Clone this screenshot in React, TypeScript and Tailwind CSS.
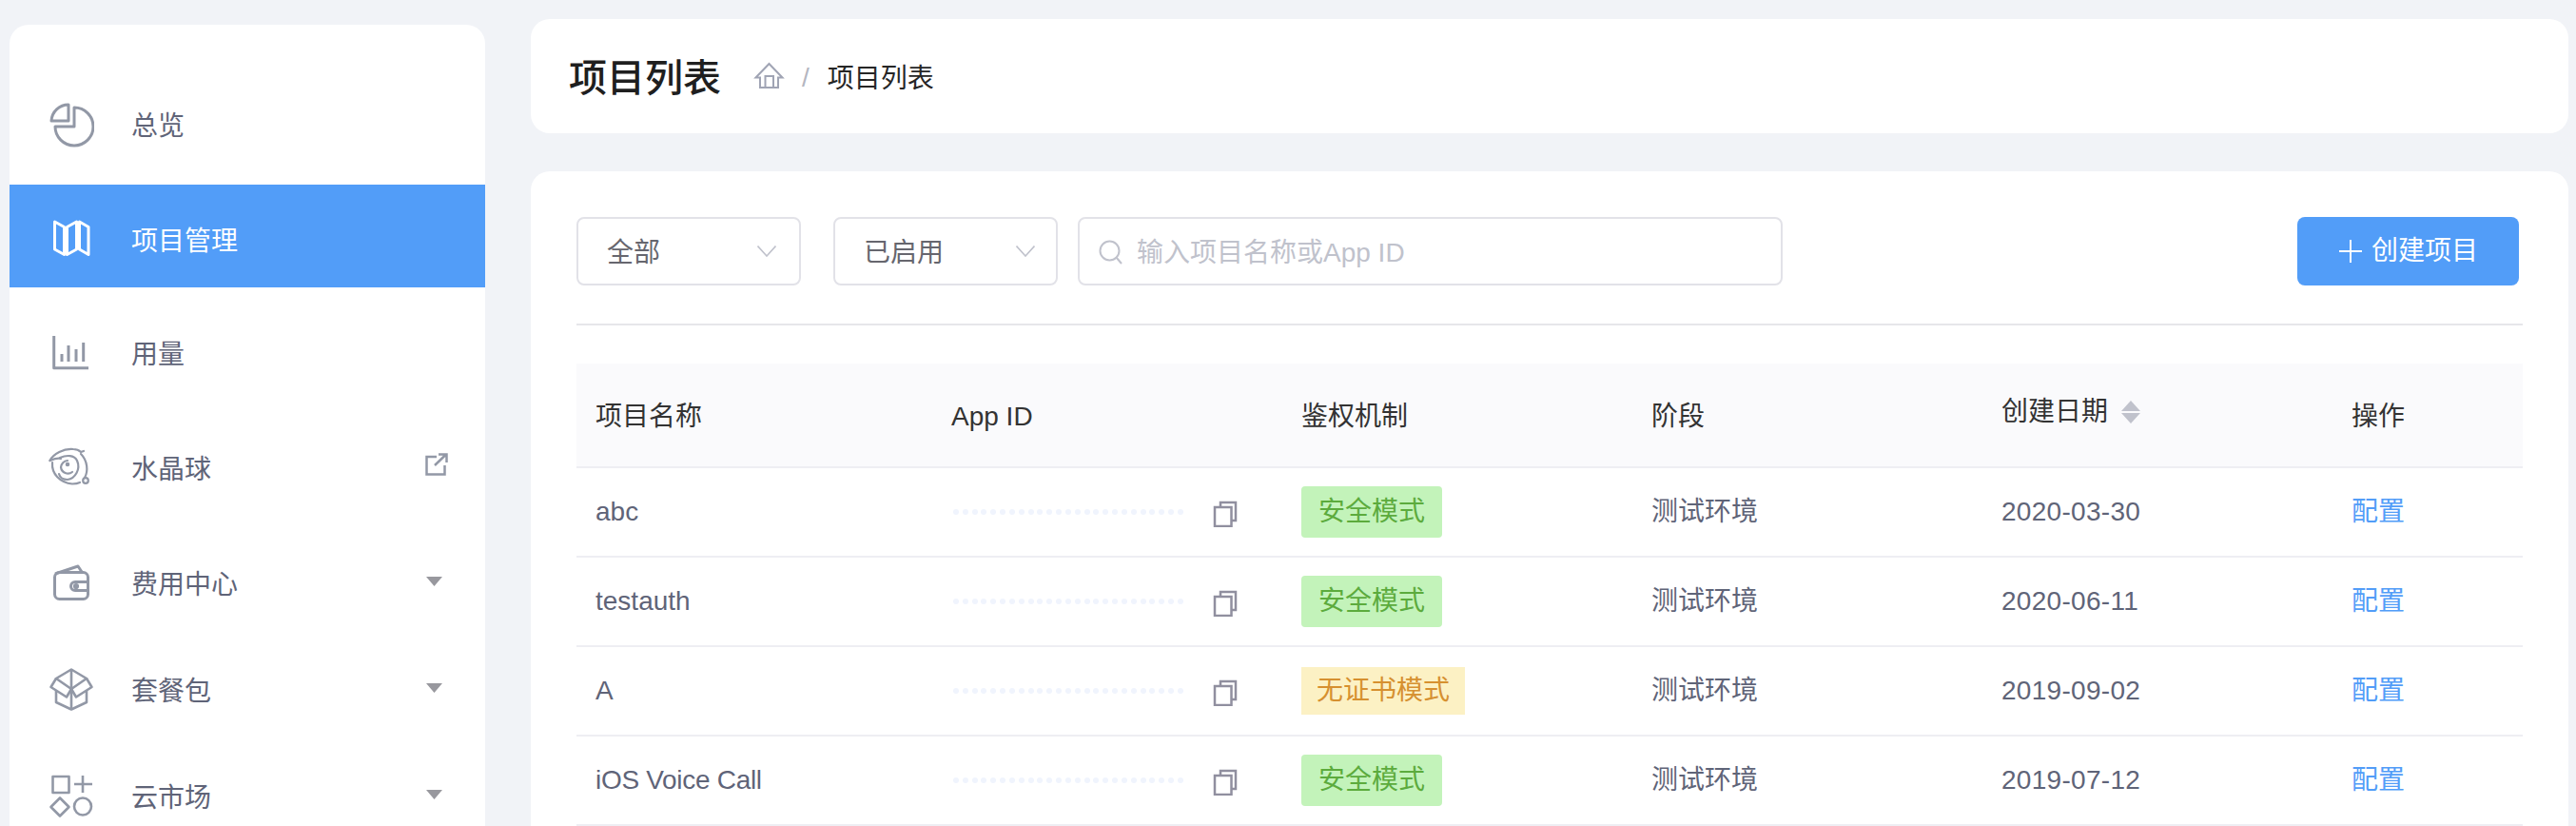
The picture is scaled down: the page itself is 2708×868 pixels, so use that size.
import React from "react";

const Stroke = "#9298a6";

function Ico({ vb, children }: { vb: string; children: React.ReactNode }) {
  return (
    <svg viewBox={vb} className="w-[48px] h-[48px] shrink-0" fill="none" stroke="currentColor" strokeWidth={3} strokeLinejoin="round">
      {children}
    </svg>
  );
}

function Caret() {
  return (
    <svg viewBox="0 0 17 10" className="w-[17px] h-[10px] ml-auto mr-[45px] mb-[4px]">
      <path d="M0 0H17L8.5 10Z" fill="#98989e" />
    </svg>
  );
}

function External() {
  return (
    <svg viewBox="448 476 24 24" className="w-[24px] h-[24px] ml-auto mr-[39px] mb-[8px]" fill="none" stroke={Stroke} strokeWidth={2.5}>
      <path d="M460 480H449.5V498.5H468.5V489" />
      <path d="M458 489L470 477.5M462 477.5H470.5V486" />
    </svg>
  );
}

function Chevron() {
  return (
    <svg viewBox="0 0 20 12" className="w-[20px] h-[12px] ml-auto" fill="none" stroke="#c0c2cc" strokeWidth={1.6}>
      <path d="M0.5 0.5L10 11L19.5 0.5" />
    </svg>
  );
}

function Copy() {
  return (
    <svg viewBox="1274 526 28 28" className="w-[28px] h-[28px] ml-[26px] mt-[4px]" fill="none" stroke="#908f9f" strokeWidth={2.5}>
      <path d="M1283 532V528H1299V547H1295" />
      <rect x="1277" y="533" width="17.5" height="20" />
    </svg>
  );
}

function Dots() {
  return (
    <div className="flex w-[246px] gap-[3.84px] overflow-hidden shrink-0">
      {Array.from({ length: 26 }).map((_, i) => (
        <span key={i} className="w-[6px] h-[6px] rounded-full bg-[#f0f4fd] shrink-0" />
      ))}
    </div>
  );
}

const rows = [
  { name: "abc", mode: "safe", date: "2020-03-30", nameCls: "" },
  { name: "testauth", mode: "safe", date: "2020-06-11", nameCls: "" },
  { name: "A", mode: "none", date: "2019-09-02", nameCls: "" },
  { name: "iOS Voice Call", mode: "safe", date: "2019-07-12", nameCls: "tracking-[-0.3px]" },
];

const gridCols = "grid grid-cols-[373px_369px_368px_369px_368px_199px]";

export default function App() {
  return (
    <div className="w-[2708px] h-[868px] overflow-hidden bg-[#f1f3f7] flex font-['Liberation_Sans','Noto_Sans_CJK_SC',sans-serif] text-[28px] text-[#5f6478]">
      {/* Sidebar */}
      <aside className="ml-[10px] mt-[26px] w-[500px] h-[900px] shrink-0 bg-white rounded-t-[20px] pt-[51px]">
        <div className="h-[108px] flex items-center pl-[41px] gap-[39px]">
          <Ico vb="51 107 48 48">
            <g className="text-[#9298a6]">
              <path d="M78 113A20 20 0 1 1 58 133H78Z" />
              <path d="M54 127A18 18 0 0 1 72 110V127Z" />
            </g>
          </Ico>
          <span className="mt-[4px]">总览</span>
        </div>

        <div className="mt-[9px] h-[108px] flex items-center pl-[41px] gap-[39px] bg-[#529df8] text-white">
          <Ico vb="51 224 48 48">
            <path d="M57.5 233L67.5 238.5V267.5L57.5 262Z" />
            <path d="M70.5 238.5L80.5 233V262L70.5 267.5Z" />
            <path d="M83.5 233L93 238.5V267.5L83.5 262Z" />
          </Ico>
          <span className="mt-[12px]">项目管理</span>
        </div>

        <div className="mt-[15px] h-[108px] flex items-center pl-[41px] gap-[39px]">
          <Ico vb="51 347 48 48">
            <g className="text-[#9298a6]">
              <path d="M56.7 353V386.7H93" />
              <path d="M65 372V380M72 363V380M80 367V380M87.7 360V380" />
            </g>
          </Ico>
          <span className="mt-[4px]">用量</span>
        </div>

        <div className="mt-[13px] h-[108px] flex items-center pl-[41px] gap-[39px]">
          <Ico vb="51 468 48 48">
            <g className="text-[#9298a6]" strokeWidth={2.2} strokeLinecap="round">
              <path d="M52.5 484C56 477 67 471 77 472C80 472 83 473 85 475L88 474" />
              <path d="M52.5 484C55 483 61 481 64 482" />
              <path d="M55 486C54 498 63 507 76 508.5C79 508.5 82 508 84 507" />
              <path d="M85 477C92 484 93 495 89 502" />
              <path d="M63 481C70 478 78 478 81 484C85 493 79 503 71 504C66 504 63 502 62 498" />
              <path d="M64 491A7.5 7.5 0 0 0 76 496" />
              <path d="M64 491A7.5 7.5 0 0 1 71 484" />
              <circle cx="71" cy="488" r="1.2" />
              <circle cx="90" cy="505" r="2.8" />
            </g>
          </Ico>
          <span className="mt-[4px]">水晶球</span>
          <External />
        </div>

        <div className="mt-[13px] h-[108px] flex items-center pl-[41px] gap-[39px]">
          <Ico vb="51 589 48 48">
            <g className="text-[#9298a6]">
              <rect x="57.5" y="601.5" width="35" height="28" rx="5" />
              <path d="M58 603L82 595L86 601" />
              <path d="M92 611.5H79A4.5 4.5 0 0 0 79 620.5H92" />
              <circle cx="80" cy="616" r="1.6" fill="#9298a6" />
            </g>
          </Ico>
          <span className="mt-[4px]">费用中心</span>
          <Caret />
        </div>

        <div className="mt-[4px] h-[108px] flex items-center pl-[41px] gap-[39px]">
          <Ico vb="51 701 48 48">
            <g className="text-[#9298a6]" strokeWidth={2.6}>
              <path d="M75 703.5L91 713L75 724L59 713Z" />
              <path d="M75 703.5V724" />
              <path d="M59 713L53.5 722L70 732.5L75 724L80 732.5L96.5 722L91 713" />
              <path d="M59 726V738L75 745.5L91 738V726" />
              <path d="M75 724V745" />
            </g>
          </Ico>
          <span className="mt-[4px]">套餐包</span>
          <Caret />
        </div>

        <div className="mt-[4px] h-[108px] flex items-center pl-[41px] gap-[39px]">
          <Ico vb="51 813 48 48">
            <g className="text-[#9298a6]" strokeWidth={2.6}>
              <rect x="55.5" y="816" width="17" height="17" />
              <path d="M78 824H97M87 815V833" />
              <path d="M63 838.5L72.5 848L63 857.5L53.5 848Z" />
              <circle cx="87" cy="847.5" r="9" />
            </g>
          </Ico>
          <span className="mt-[4px]">云市场</span>
          <Caret />
        </div>
      </aside>

      {/* Main */}
      <main className="ml-[48px] w-[2142px] shrink-0 pt-[20px] flex flex-col">
        <header className="h-[120px] shrink-0 bg-white rounded-[20px] flex items-center pl-[40px]">
          <h1 className="text-[40px] font-medium text-[#1f1f1f] leading-none mt-[4px]">项目列表</h1>
          <svg viewBox="792 64 34 34" className="w-[34px] h-[34px] ml-[34px]" fill="none" stroke="#a0a4b4" strokeWidth={2}>
            <path d="M794.5 82.5L808.5 68L822.5 82.5H818V93H799V82.5Z" />
            <path d="M804.5 93V81H813V93" />
          </svg>
          <span className="ml-[17px] text-[#b4b6c0] mt-[4px]">/</span>
          <span className="ml-[19px] text-[#262626] mt-[5px]">项目列表</span>
        </header>

        <section className="mt-[40px] flex-1 bg-white rounded-t-[20px] px-[48px] pt-[48px]">
          <div className="flex h-[72px]">
            <div className="w-[236px] border-2 border-[#e2e2e8] rounded-[8px] flex items-center pl-[30px] pr-[24px] text-[#66666e]">
              <span className="mt-[3px]">全部</span>
              <Chevron />
            </div>
            <div className="ml-[34px] w-[236px] border-2 border-[#e2e2e8] rounded-[8px] flex items-center pl-[30px] pr-[22px] text-[#66666e]">
              <span className="mt-[3px]">已启用</span>
              <Chevron />
            </div>
            <div className="ml-[21px] w-[741px] border-2 border-[#e2e2e8] rounded-[8px] flex items-center pl-[20px]">
              <svg viewBox="0 0 26 26" className="w-[26px] h-[26px] mt-[2px] shrink-0" fill="none" stroke="#c0c2cc" strokeWidth={2}>
                <circle cx="11.5" cy="11.5" r="10" />
                <path d="M18.5 18.5L24 25" />
              </svg>
              <input
                readOnly
                placeholder="输入项目名称或App ID"
                className="ml-[14px] mt-[3px] flex-1 outline-none bg-transparent placeholder:text-[#c0c2cc]"
              />
            </div>
            <button className="ml-auto mr-[4px] w-[233px] h-[72px] bg-[#529df8] rounded-[8px] text-white flex items-center pl-[43px]">
              <svg viewBox="0 0 26 26" className="w-[26px] h-[26px] shrink-0" stroke="#ffffff" strokeWidth={2}>
                <path d="M1 13H25M13 1V25" />
              </svg>
              <span className="ml-[9px]">创建项目</span>
            </button>
          </div>

          <div className="mt-[40px] h-[2px] bg-[#e6e6ea]" />

          <div className="mt-[40px]">
            <div className={`${gridCols} h-[110px] bg-[#fafafc] border-b-2 border-[#eeeef3] items-center text-[#333333]`}>
              <div className="pl-[20px] mt-[3px]">项目名称</div>
              <div className="pl-[21px] mt-[3px]">App ID</div>
              <div className="pl-[20px] mt-[3px]">鉴权机制</div>
              <div className="pl-[20px] mt-[3px]">阶段</div>
              <div className="pl-[19px] flex items-center mb-[7px]">
                <span>创建日期</span>
                <svg viewBox="0 0 20 24" className="w-[20px] h-[24px] ml-[14px]">
                  <path d="M10 0L20 11H0Z" fill="#c0c2cc" />
                  <path d="M10 24L20 13H0Z" fill="#c0c2cc" />
                </svg>
              </div>
              <div className="pl-[19px] mt-[3px]">操作</div>
            </div>
            {rows.map((r) => (
              <div key={r.name} className={`${gridCols} h-[94px] border-b-2 border-[#eeeef3] items-center`}>
                <div className={`pl-[20px] ${r.nameCls}`}>{r.name}</div>
                <div className="pl-[23px] flex items-center">
                  <Dots />
                  <Copy />
                </div>
                <div className="pl-[20px]">
                  {r.mode === "safe" ? (
                    <span className="inline-flex items-center h-[54px] w-[148px] justify-center rounded-[4px] bg-[#c3f3ba] text-[#5cab3d]">安全模式</span>
                  ) : (
                    <span className="inline-flex items-center h-[50px] w-[172px] justify-center bg-[#fcf1c4] text-[#d69030]">无证书模式</span>
                  )}
                </div>
                <div className="pl-[20px]">测试环境</div>
                <div className="pl-[19px] tracking-[0.3px]">{r.date}</div>
                <div className="pl-[19px] text-[#529df8]">配置</div>
              </div>
            ))}
          </div>
        </section>
      </main>
    </div>
  );
}
